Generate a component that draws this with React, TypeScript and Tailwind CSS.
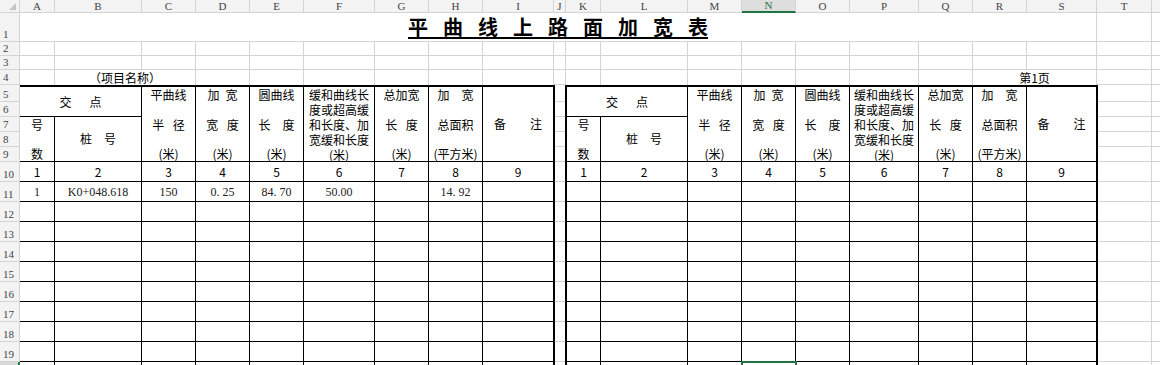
import type { ReactNode } from "react";

// sheet columns A..T (widths include the right gridline)
const COLS = [
  { key: "A", w: "w-[35px]" },
  { key: "B", w: "w-[87px]" },
  { key: "C", w: "w-[54px]" },
  { key: "D", w: "w-[54px]" },
  { key: "E", w: "w-[54px]" },
  { key: "F", w: "w-[71px]" },
  { key: "G", w: "w-[54px]" },
  { key: "H", w: "w-[54px]" },
  { key: "I", w: "w-[71px]" },
  { key: "J", w: "w-[12px]" },
  { key: "K", w: "w-[35px]" },
  { key: "L", w: "w-[87px]" },
  { key: "M", w: "w-[54px]" },
  { key: "N", w: "w-[54px]" },
  { key: "O", w: "w-[54px]" },
  { key: "P", w: "w-[69px]" },
  { key: "Q", w: "w-[54px]" },
  { key: "R", w: "w-[54px]" },
  { key: "S", w: "w-[70px]" },
  { key: "T", w: "w-[55px]" },
];

const BODY_ROWS = [
  { n: 5, h: "h-[17px]" },
  { n: 6, h: "h-[15px]" },
  { n: 7, h: "h-[15px]" },
  { n: 8, h: "h-[15px]" },
  { n: 9, h: "h-[15px]" },
  { n: 10, h: "h-[20px]" },
  { n: 11, h: "h-[20px]" },
  { n: 12, h: "h-[20px]" },
  { n: 13, h: "h-[20px]" },
  { n: 14, h: "h-[20px]" },
  { n: 15, h: "h-[20px]" },
  { n: 16, h: "h-[20px]" },
  { n: 17, h: "h-[20px]" },
  { n: 18, h: "h-[20px]" },
  { n: 19, h: "h-[20px]" },
  { n: 20, h: "h-[20px]" },
];

const GRID = "border-[#d4d4d4]";
const CJK = "font-['Noto_Sans_CJK_SC',sans-serif]";

// header blocks spanning rows 5..9, one string per sheet row
const HEADS: string[][] = [
  ["平曲线", "", "半\u2002\u2009径", "", "(米)"],
  ["加\u2002宽", "", "宽\u2002\u2009度", "", "(米)"],
  ["圆曲线", "", "长\u2003度", "", "(米)"],
  ["缓和曲线长", "度或超高缓", "和长度、加", "宽缓和长度", "(米)"],
  ["总加宽", "", "长\u2002\u2009度", "", "(米)"],
  ["加\u2003宽", "", "总面积", "", "(平方米)"],
];

const NUMS = ["1", "2", "3", "4", "5", "6", "7", "8", "9"];
const FIRST = ["1", "K0+048.618", "150", "0. 25", "84. 70", "50.00", "", "14. 92", ""];
const EMPTY = ["", "", "", "", "", "", "", "", ""];

function RowHead({ n, h, active }: { n: number; h: string; active?: boolean }) {
  return (
    <div
      className={`${h} w-[20px] shrink-0 flex items-end pl-[3px] pb-[1px] border-b font-['Liberation_Serif',serif] text-[11px] leading-none ${
        active
          ? "bg-[#d9d9d9] text-[#217346] border-r-2 border-r-[#217346] border-b-[#d4d4d4]"
          : `bg-[#f3f3f3] text-[#444] border-r ${GRID}`
      }`}
    >
      {n}
    </div>
  );
}

function HeadBlock({ lines, last }: { lines: string[]; last?: boolean }) {
  return (
    <div
      className={`row-span-5 flex flex-col items-center border-b border-black ${last ? "" : "border-r"}`}
    >
      {lines.map((t, i) => (
        <div key={i} className="h-[15px] whitespace-pre leading-[15px]">
          {t}
        </div>
      ))}
    </div>
  );
}

function DataRow({ vals, selected }: { vals: string[]; selected?: number }) {
  return (
    <>
      {vals.map((v, i) => (
        <div
          key={i}
          className={`flex items-center justify-center border-b border-black font-['Liberation_Serif',serif] text-[12px] text-[#222] ${
            i < 8 ? "border-r" : ""
          } ${selected === i ? "relative z-10 outline-2 outline-offset-[-1px] outline-[#217346]" : ""}`}
        >
          {v}
        </div>
      ))}
    </>
  );
}

function NumRow() {
  return (
    <>
      {NUMS.map((v, i) => (
        <div
          key={i}
          className={`flex items-center justify-center border-b border-black text-[12px] ${i < 8 ? "border-r" : ""}`}
        >
          {v}
        </div>
      ))}
    </>
  );
}

function Table({ cols, className, filled }: { cols: string; className: string; filled?: boolean }) {
  return (
    <div
      className={`grid ${cols} grid-rows-[15px_15px_15px_15px_15px_repeat(11,20px)] shrink-0 border-t-2 border-black ${className} ${CJK} text-[12px] text-black`}
    >
      <div className="col-span-2 row-span-2 flex items-center justify-center whitespace-pre border-r border-b border-black">
        {"交\u2003\u2002点"}
      </div>
      {HEADS.map((lines, i) => (
        <HeadBlock key={i} lines={lines} />
      ))}
      <div className="row-span-5 flex items-center justify-center whitespace-pre border-b border-black">
        {"备\u2003\u2003注"}
      </div>
      <div className="row-span-3 flex flex-col items-center border-r border-b border-black">
        <div className="h-[15px] leading-[15px]">号</div>
        <div className="h-[15px]" />
        <div className="h-[15px] leading-[15px]">数</div>
      </div>
      <div className="row-span-3 flex items-center justify-center whitespace-pre border-r border-b border-black">
        {"桩\u2003号"}
      </div>
      <NumRow />
      <DataRow vals={filled ? FIRST : EMPTY} />
      {BODY_ROWS.slice(7).map((r) => (
        <DataRow key={r.n} vals={EMPTY} selected={!filled && r.n === 20 ? 3 : undefined} />
      ))}
    </div>
  );
}

function GridCol({ w, right }: { w: string; right?: boolean }) {
  return (
    <div className={`${w} shrink-0 flex flex-col`}>
      {BODY_ROWS.map((r) => (
        <div key={r.n} className={`${r.h} border-b ${right ? "border-r" : ""} ${GRID}`} />
      ))}
    </div>
  );
}

function Cell({ w, cls = "border-r border-b", children }: { w: string; cls?: string; children?: ReactNode }) {
  return <div className={`${w} shrink-0 ${cls} ${GRID}`}>{children}</div>;
}

export default function App() {
  return (
    <div className="h-[365px] w-[1160px] overflow-hidden bg-white">
      {/* column letters */}
      <div className="flex h-[13px]">
        <div className={`w-[20px] shrink-0 flex items-end justify-end pr-[3px] pb-[2px] bg-[#f3f3f3] border-r border-b ${GRID}`}>
          <svg width="7" height="7" viewBox="0 0 7 7">
            <polygon points="7,0 7,7 0,7" fill="#c4c4c4" />
          </svg>
        </div>
        {COLS.map((c) => (
          <div
            key={c.key}
            className={`${c.w} shrink-0 flex items-center justify-center font-['Liberation_Serif',serif] text-[11px] leading-none ${
              c.key === "N"
                ? "bg-[#dedede] text-[#217346] border-r border-[#d4d4d4] border-b-2 border-b-[#217346]"
                : `bg-[#f3f3f3] text-[#444] border-r border-b ${GRID}`
            }`}
          >
            {c.key}
          </div>
        ))}
        <div className={`flex-1 bg-[#f3f3f3] border-b ${GRID}`} />
      </div>

      {/* row 1: title */}
      <div className="flex h-[29px]">
        <RowHead n={1} h="h-[29px]" />
        <Cell w="w-[1077px]" cls="border-r border-b flex items-end justify-center pb-[2px]">
          <span className={`flex gap-[15px] border-b-2 border-black ${CJK} text-[20px] font-bold leading-[20px] text-black`}>
            {"平曲线上路面加宽表".split("").map((ch, i) => (
              <span key={i}>{ch}</span>
            ))}
          </span>
        </Cell>
        <Cell w="w-[55px]" />
        <div className={`flex-1 border-b ${GRID}`} />
      </div>

      {/* rows 2-3 */}
      {[2, 3].map((n) => (
        <div key={n} className="flex h-[14px]">
          <RowHead n={n} h="h-[14px]" />
          {COLS.map((c) => (
            <Cell key={c.key} w={c.w} />
          ))}
          <div className={`flex-1 border-b ${GRID}`} />
        </div>
      ))}

      {/* row 4 */}
      <div className={`flex h-[15px] ${CJK} text-[12px] leading-[15px] text-black`}>
        <RowHead n={4} h="h-[15px]" />
        <Cell w="w-[35px]" cls="border-r" />
        <Cell w="w-[141px]" cls="border-r flex items-end justify-center">
          （项目名称）
        </Cell>
        <Cell w="w-[54px]" cls="border-r" />
        <Cell w="w-[54px]" cls="border-r" />
        <Cell w="w-[71px]" cls="border-r" />
        <Cell w="w-[54px]" cls="border-r" />
        <Cell w="w-[54px]" cls="border-r" />
        <Cell w="w-[71px]" cls="border-r" />
        <Cell w="w-[12px]" />
        <Cell w="w-[35px]" cls="border-r" />
        <Cell w="w-[87px]" cls="border-r" />
        <Cell w="w-[54px]" cls="border-r" />
        <Cell w="w-[54px]" cls="border-r" />
        <Cell w="w-[54px]" cls="border-r" />
        <Cell w="w-[69px]" cls="border-r" />
        <Cell w="w-[54px]" cls="border-r" />
        <Cell w="w-[124px]" cls="border-r flex items-end justify-center">
          第1页
        </Cell>
        <Cell w="w-[55px]" />
        <div className={`flex-1 border-b ${GRID}`} />
      </div>

      {/* rows 5-20 */}
      <div className="flex items-start">
        <div className="w-[20px] shrink-0 flex flex-col">
          {BODY_ROWS.map((r) => (
            <RowHead key={r.n} n={r.n} h={r.h} active={r.n === 20} />
          ))}
        </div>
        <Table
          cols="grid-cols-[35px_87px_54px_54px_54px_71px_54px_54px_70px]"
          className="w-[535px] border-r-2"
          filled
        />
        <GridCol w="w-[10px]" />
        <Table
          cols="grid-cols-[34px_87px_54px_54px_54px_69px_54px_54px_69px]"
          className="w-[533px] border-l-2 border-r-2"
        />
        <GridCol w="w-[54px]" right />
        <div className="flex-1">
          <GridCol w="w-full" />
        </div>
      </div>
    </div>
  );
}
